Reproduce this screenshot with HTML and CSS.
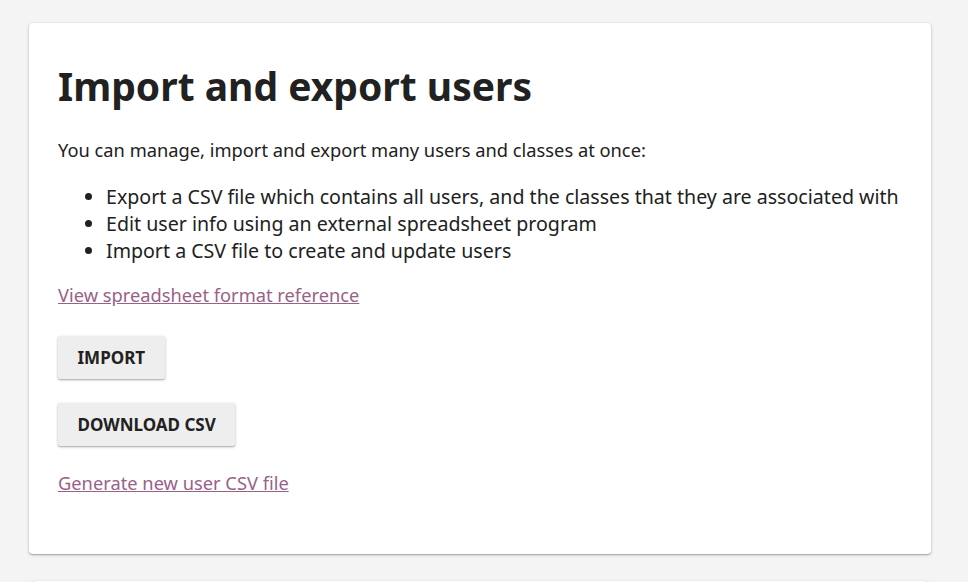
FILE: index.html
```html
<!DOCTYPE html>
<html>
<head>
<meta charset="utf-8">
<link rel="stylesheet" href="styles.css">
</head>
<body>
<div class="page">
  <div class="card">
    <h1 class="title">Import and export users</h1>
    <p class="intro">You can manage, import and export many users and classes at once:</p>
    <ul class="list">
      <li>Export a CSV file which contains all users, and the classes that they are associated with</li>
      <li>Edit user info using an external spreadsheet program</li>
      <li>Import a CSV file to create and update users</li>
    </ul>
    <p class="linkrow"><a class="link" href="#">View spreadsheet format reference</a></p>
    <div class="btnrow"><button class="btn">Import</button></div>
    <div class="btnrow"><button class="btn">Download CSV</button></div>
    <p class="linkrow last"><a class="link" href="#">Generate new user CSV file</a></p>
  </div>
  <div class="card next"></div>
</div>
</body>
</html>
```
FILE: styles.css
```css
html, body {
  margin: 0;
  padding: 0;
  background: #f4f4f4;
  font-family: "Noto Sans", sans-serif;
  color: #212121;
  overflow: hidden;
  height: 582px;
}
.page {
  padding: 23px 37px 0 29px;
  display: flex;
  flex-direction: column;
  gap: 27px;
}
.card {
  background: #fff;
  border-radius: 4px;
  box-shadow: 0 1px 3px rgba(0,0,0,0.25), 0 1px 1px rgba(0,0,0,0.14);
  padding: 29px 29px 37px 29px;
  height: 531px;
  box-sizing: border-box;
}
.card.next {
  margin: 0 3px;
  height: 100px;
}
.title {
  margin: 10px 0 0 0;
  font-size: 39px;
  font-weight: 700;
  line-height: 48px;
}
.intro {
  margin: 26px 0 0 0;
  font-size: 18.3px;
  line-height: 27px;
}
.list {
  margin: 20px 0 0 0;
  padding-left: 48px;
  font-size: 19.6px;
  line-height: 27px;
}
.linkrow {
  margin: 17px 0 0 0;
  font-size: 18.3px;
  line-height: 27px;
}
.link {
  color: #996189;
}
.btnrow {
  margin-top: 28px;
}
.btnrow + .btnrow {
  margin-top: 24px;
}
.btn {
  font-family: "Noto Sans", sans-serif;
  font-size: 17px;
  font-weight: 700;
  text-transform: uppercase;
  color: #212121;
  background: #eeeeee;
  border: none;
  border-radius: 2px;
  height: 43px;
  padding: 0 19.5px;
  box-shadow: 0 1px 3px rgba(0,0,0,0.25), 0 1px 1px rgba(0,0,0,0.14);
}
.linkrow.last {
  margin-top: 23px;
}
```
